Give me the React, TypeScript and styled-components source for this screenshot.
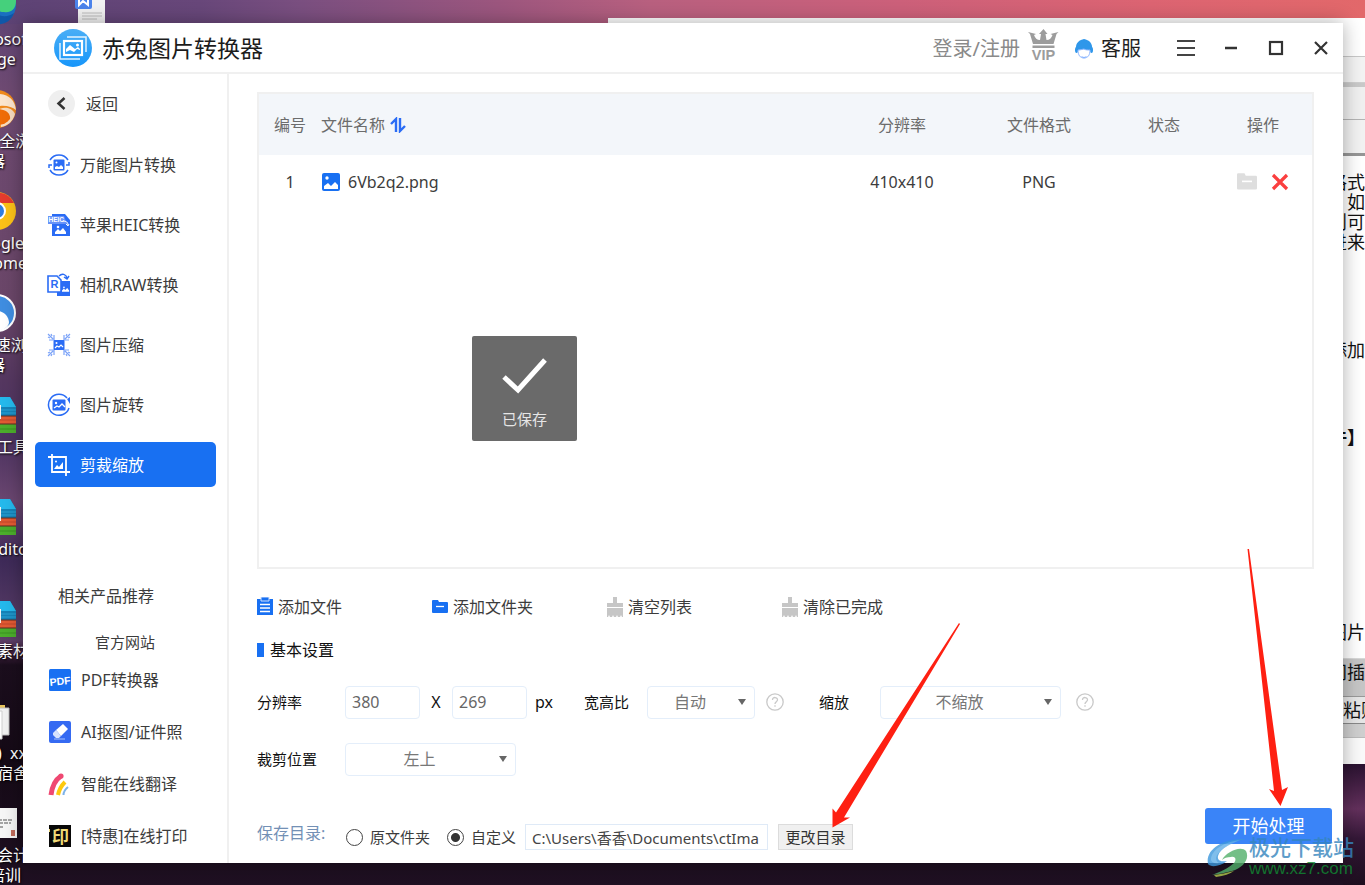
import React from "react";
import styled, { createGlobalStyle, css } from "styled-components";

const Global = createGlobalStyle`
  * { box-sizing: border-box; }
  html, body, #root { height: 100%; }
  body {
    margin: 0;
    overflow: hidden;
    font-family: "Noto Sans", "Noto Sans CJK SC", sans-serif;
    font-size: 16px;
    line-height: 24px;
    color: #3c3c3c;
  }
  button, input, select {
    font: inherit;
    color: inherit;
  }
  button {
    border: 0;
    padding: 0;
    background: none;
    cursor: pointer;
  }
  svg { display: block; flex: none; }
`;

/* ---------- desktop ---------- */

const Desktop = styled.div`
  position: relative;
  height: 100%;
  overflow: hidden;
  background:
    linear-gradient(90deg, #5d4375 0, #68477a 200px, #7a4f80 300px, #9c567e 500px, #b8607f 650px, #cc607a 900px, #dc6472 1150px, #e2686a 100%) top / 100% 24px no-repeat,
    linear-gradient(180deg, #2a1230 0, #63305c 45px, #331736 75px, #1d0e1e 100%) right bottom / 22px 121px no-repeat,
    linear-gradient(180deg, #5d4375 0, #6e4a72 90px, #6a4668 300px, #553760 380px, #4c3360 440px, #6a4670 500px, #3e2a58 560px, #5d4068 640px, #432342 652px, #1b0e1d 665px, #150a16 760px, #1f1022 100%);
`;

const DesktopColumn = styled.div`
  position: absolute;
  top: -13px;
  left: -53px;
  width: 100px;
  display: flex;
  flex-direction: column;
`;

const Shortcut = styled.div`
  height: 102px;
  display: flex;
  flex-direction: column;
  align-items: center;
  white-space: nowrap;
  font-size: 16px;
  line-height: 20px;
  color: #fff;
  text-shadow: 1px 1px 2px #000;
  svg { margin-bottom: 2px; }
`;

const DocShortcut = styled.div`
  position: absolute;
  top: -8px;
  left: 74px;
`;

function EdgeIcon() {
  return (
    <svg width="40" height="40" viewBox="0 0 40 40">
      <circle cx="20" cy="18" r="19" fill="#1a6fc0" />
      <path d="M14 0h25v14c0 9-6 12-12 11-6 0-9-3-7-7z" fill="#45d07c" />
      <path d="M20 27c6 4 13 2 17-1-3 9-11 12-18 11z" fill="#0f57a8" />
    </svg>
  );
}
function OrangeBrowser() {
  return (
    <svg width="40" height="40" viewBox="0 0 40 40">
      <circle cx="20" cy="20" r="19" fill="#f08a1c" />
      <path d="M14 6c14-4 24 3 25 15-5-4-14-6-25-2z" fill="#fbe6cf" />
      <path d="M22 20c8-3 14 0 16 5-2 8-8 12-14 13z" fill="#f7dcc0" />
      <path d="M20 20c8 0 14 4 13 10-4 5-9 6-13 6z" fill="#ef6c08" />
    </svg>
  );
}
function ChromeIcon() {
  return (
    <svg width="40" height="40" viewBox="0 0 40 40">
      <circle cx="20" cy="20" r="19" fill="#fbc117" />
      <path d="M3 12A19 19 0 0 1 37 12H20z" fill="#e33b2e" />
      <path d="M2 14l11 20c3 4 6 5 8 5l-4-12z" fill="#2da94f" />
      <circle cx="20" cy="20" r="9" fill="#fff" />
      <circle cx="20" cy="20" r="7" fill="#2f7de0" />
    </svg>
  );
}
function SpeedBrowser() {
  return (
    <svg width="40" height="40" viewBox="0 0 40 40">
      <circle cx="20" cy="20" r="18" fill="#3f8de0" stroke="#fff" strokeWidth="2" />
      <path d="M14 18c8-2 17 2 18 11 0 3-3 7-8 8l-12 1z" fill="#fff" />
    </svg>
  );
}
function ArchiveIcon() {
  return (
    <svg width="40" height="40" viewBox="0 0 40 40">
      <path d="M4 2h29l6 10v9H4z" fill="#1583b8" />
      <path d="M4 2h29l6 10H4z" fill="#25b9ec" />
      <path d="M4 15h35M4 18h35" stroke="#2aa3d6" strokeWidth="1" />
      <path d="M4 21h35v8H4z" fill="#e25a33" />
      <path d="M4 29h35v9H4z" fill="#4cae2c" />
      <path d="M4 25h35" stroke="#c2472a" strokeWidth="1" />
      <path d="M4 34h35" stroke="#3b9220" strokeWidth="1" />
      <path d="M4 21h35M4 29h35" stroke="#5a2a20" strokeWidth="1" />
      <path d="M22 10v14" stroke="#f2f2f2" strokeWidth="4" />
    </svg>
  );
}
function FolderIcon() {
  return (
    <svg width="40" height="40" viewBox="0 0 40 40">
      <path d="M4 4h24v16H4z" fill="#e9c55c" />
      <path d="M16 7h16v27H16z" fill="#f1f1f1" stroke="#bdbdbd" />
      <path d="M12 10h13v28H12z" fill="#fff" stroke="#cfcfcf" />
    </svg>
  );
}
function SheetIcon() {
  return (
    <svg width="40" height="40" viewBox="0 0 40 40">
      <path d="M0 5h40v30H0z" fill="#f6f6f6" />
      <path d="M16 17h20M22 20h12M22 24h4" stroke="#555" strokeWidth="1" strokeDasharray="4 1" />
      <path d="M34 27h4v6h-4z" fill="#c06c5c" />
    </svg>
  );
}

/* ---------- document window behind ---------- */

const BackWindow = styled.section`
  position: absolute;
  top: 18px;
  left: 608px;
  right: -40px;
  height: 746px;
  display: flex;
  flex-direction: column;
  background: #fff;
  color: #111;
  font-size: 18px;
  line-height: 20px;
  white-space: nowrap;
`;

const Band = styled.div<{ $h: number; $bg: string; $line?: string; $pad?: number }>`
  flex: none;
  height: ${(p) => p.$h}px;
  padding: 3px 0 0 ${(p) => p.$pad ?? 721}px;
  background: ${(p) => p.$bg};
  border-bottom: 1px solid ${(p) => p.$line ?? p.$bg};
`;

const Rule = styled.div<{ $h: number; $bg: string }>`
  flex: none;
  height: ${(p) => p.$h}px;
  background: ${(p) => p.$bg};
`;

const BackDoc = styled.div`
  flex: 1;
  padding: 16px 0 0 721px;
`;

const DocLine = styled.p<{ $before?: number; $indent?: boolean }>`
  margin: ${(p) => p.$before ?? 0}px 0 0;
  text-indent: ${(p) => (p.$indent ? 18 : 0)}px;
`;

/* ---------- application window ---------- */

const AppWindow = styled.main`
  position: absolute;
  inset: 23px 22px 22px 23px;
  display: flex;
  flex-direction: column;
  background: #fff;
  box-shadow: 0 0 18px rgba(0, 0, 0, 0.32);
`;

const TitleBar = styled.header`
  flex: none;
  height: 51px;
  display: flex;
  align-items: center;
  padding-left: 31px;
  border-bottom: 2px solid #f0f0f0;
`;

const AppTitle = styled.h1`
  flex: 1;
  margin: 0 0 0 10px;
  font-size: 23px;
  line-height: 32px;
  font-weight: 400;
  color: #1c1c1c;
`;

const LoginLink = styled.a`
  font-size: 20px;
  line-height: 28px;
  padding-top: 2px;
  color: #8a8a8a;
  text-decoration: none;
  margin-right: 8px;
`;

const VipBadge = styled.span`
  align-self: flex-start;
  margin-top: 6px;
`;

const ServiceButton = styled.button`
  display: flex;
  align-items: center;
  gap: 8px;
  margin: 0 22px 0 16px;
  padding-top: 2px;
  font-size: 20px;
  line-height: 28px;
  color: #1f1f1f;
`;

const WindowButton = styled.button`
  width: 45px;
  height: 48px;
  display: grid;
  place-items: center;
`;

const Body = styled.div`
  flex: 1;
  min-height: 0;
  display: flex;
`;

const Sidebar = styled.aside`
  flex: none;
  width: 206px;
  display: flex;
  flex-direction: column;
  padding: 16px 12px 15px;
  border-right: 2px solid #f0f0f0;
`;

const BackButton = styled.button`
  display: flex;
  align-items: center;
  gap: 11px;
  margin: 0 0 25px 13px;
`;

const Nav = styled.nav`
  display: flex;
  flex-direction: column;
  gap: 15px;
`;

const NavItem = styled.button<{ $active?: boolean }>`
  height: 45px;
  width: 181px;
  padding: 0 12px;
  display: flex;
  align-items: center;
  gap: 9px;
  border-radius: 5px;
  white-space: nowrap;
  ${(p) =>
    p.$active &&
    css`
      background: #1870f2;
      color: #fff;
    `}
`;

const Related = styled.section`
  margin-top: auto;
  padding-left: 13px;
`;

const RelatedTitle = styled.h2`
  margin: 0 0 24px 10px;
  font-size: 16px;
  font-weight: 400;
`;

const SiteLink = styled.a`
  display: block;
  margin: 0 0 16px 47px;
  font-size: 15px;
  line-height: 20px;
  color: inherit;
  text-decoration: none;
`;

const RelatedList = styled.div`
  display: flex;
  flex-direction: column;
  gap: 28px;
`;

const RelatedLink = styled.a`
  display: flex;
  align-items: center;
  gap: 9px;
  height: 24px;
  color: inherit;
  text-decoration: none;
  white-space: nowrap;
`;

const Content = styled.div`
  flex: 1;
  min-width: 0;
  display: flex;
  flex-direction: column;
`;

const FilePanel = styled.section`
  flex: 1;
  min-height: 0;
  margin: 18px 29px 0 28px;
  border: 2px solid #f0f0f0;
`;

const FileTable = styled.table`
  width: 100%;
  table-layout: fixed;
  border-collapse: collapse;
`;

const HeadCell = styled.th<{ $w?: number; $left?: boolean }>`
  width: ${(p) => (p.$w ? `${p.$w}px` : "auto")};
  height: 61px;
  padding: 0;
  background: #f3f6fa;
  color: #6c6c6c;
  font-weight: 400;
  text-align: ${(p) => (p.$left ? "left" : "center")};
`;

const Cell = styled.td`
  height: 54px;
  padding: 0;
  text-align: center;
`;

const Inline = styled.div<{ $gap: number; $center?: boolean }>`
  display: flex;
  align-items: center;
  justify-content: ${(p) => (p.$center ? "center" : "flex-start")};
  gap: ${(p) => p.$gap}px;
`;

const Toolbar = styled.div`
  flex: none;
  display: flex;
  height: 36px;
  margin: 20px 28px 10px;
`;

const ToolButton = styled.button`
  width: 175px;
  display: flex;
  align-items: center;
  gap: 5px;
`;

const SectionTitle = styled.h2`
  flex: none;
  margin: 0 28px 21px;
  height: 30px;
  display: flex;
  align-items: center;
  gap: 6px;
  font-size: 16px;
  font-weight: 400;
  color: #111;
  &::before {
    content: "";
    width: 7px;
    height: 14px;
    background: #1870f2;
  }
`;

const FormRow = styled.div`
  flex: none;
  display: flex;
  align-items: center;
  height: 32px;
  margin: 0 28px 25px;
  font-size: 15px;
  color: #111;
`;

const FieldLabel = styled.label<{ $w: number }>`
  flex: none;
  width: ${(p) => p.$w}px;
`;

const SizeInput = styled.input`
  width: 75px;
  height: 33px;
  padding: 0 6px;
  border: 1px solid #e4eefa;
  border-radius: 4px;
  font-size: 16px;
  color: #666;
  outline: none;
`;

const Unit = styled.span<{ $w: number; $center?: boolean }>`
  width: ${(p) => p.$w}px;
  font-size: 16px;
  padding-left: ${(p) => (p.$center ? 0 : 8)}px;
  text-align: ${(p) => (p.$center ? "center" : "left")};
`;

const SelectBox = styled.div<{ $w: number }>`
  position: relative;
  width: ${(p) => p.$w}px;
  height: 33px;
  svg {
    position: absolute;
    right: 9px;
    top: 13px;
    pointer-events: none;
  }
`;

const Select = styled.select`
  width: 100%;
  height: 100%;
  padding: 0 22px 0 0;
  border: 1px solid #e4eefa;
  border-radius: 4px;
  background: #fff;
  appearance: none;
  font-size: 16px;
  color: #777;
  text-align: center;
  text-align-last: center;
  outline: none;
`;

const HelpButton = styled.button<{ $before: number; $after?: number }>`
  margin: 0 ${(p) => p.$after ?? 0}px 0 ${(p) => p.$before}px;
`;

const Footer = styled.footer`
  flex: none;
  height: 55px;
  margin-top: 8px;
  padding: 0 11px 0 28px;
  display: flex;
  align-items: flex-start;
  justify-content: space-between;
`;

const SaveRow = styled.div`
  display: flex;
  align-items: center;
  padding-top: 16px;
  height: 42px;
  font-size: 15px;
`;

const SaveLabel = styled.span`
  width: 89px;
  align-self: flex-start;
  height: 18px;
  line-height: 18px;
  font-size: 16px;
  color: #7390b5;
`;

const RadioLabel = styled.label<{ $after: number }>`
  display: flex;
  align-items: center;
  gap: 7px;
  margin-right: ${(p) => p.$after}px;
`;

const Radio = styled.input`
  appearance: none;
  width: 17px;
  height: 17px;
  margin: 0;
  border: 1px solid #444;
  border-radius: 50%;
  background: #fff;
  &:checked {
    background: radial-gradient(circle, #333 0 4px, #fff 5px);
  }
`;

const PathInput = styled.input`
  width: 243px;
  height: 26px;
  padding: 0 6px;
  border: 1px solid #dfeaf7;
  font-size: 15px;
  color: #444;
  outline: none;
`;

const DirButton = styled.button`
  width: 75px;
  height: 26px;
  margin-left: 10px;
  border: 1px solid #dcdcdc;
  background: #f0f0f0;
  font-size: 15px;
  color: #333;
`;

const StartButton = styled.button`
  width: 127px;
  height: 36px;
  border-radius: 3px;
  background: #3a84f8;
  color: #fff;
  font-size: 18px;
`;

/* ---------- overlays ---------- */

const Toast = styled.div`
  position: absolute;
  left: 472px;
  top: 336px;
  width: 105px;
  height: 105px;
  padding-top: 22px;
  display: flex;
  flex-direction: column;
  align-items: center;
  gap: 14px;
  background: #6a6a6a;
  border-radius: 2px;
  color: #e6e6e6;
  font-size: 15px;
  line-height: 22px;
`;

const Arrows = styled.svg`
  position: absolute;
  right: 0;
  bottom: 0;
  pointer-events: none;
`;

const Watermark = styled.div`
  position: absolute;
  right: 11px;
  bottom: 7px;
  display: flex;
  align-items: flex-end;
  opacity: 0.8;
`;

const WatermarkText = styled.div`
  font-size: 21px;
  line-height: 25px;
  font-weight: 500;
  color: #3585bd;
`;

const WatermarkUrl = styled.div`
  font-family: "Liberation Sans", sans-serif;
  font-size: 17px;
  line-height: 18px;
  color: #118a33;
`;

const BLUE = "#2a6cf5";

function Logo() {
  return (
    <svg width="38" height="38" viewBox="0 0 38 38">
      <defs>
        <linearGradient id="logo" x1="0" y1="0" x2="0" y2="1">
          <stop offset="0" stopColor="#4aaef6" />
          <stop offset="1" stopColor="#1796fa" />
        </linearGradient>
      </defs>
      <circle cx="19" cy="19" r="19" fill="url(#logo)" />
      <g fill="none" stroke="#fff" strokeWidth="1.500">
        <path d="M13 8h19v15M6 14v16h20" opacity=".85" />
        <rect x="10" y="12" width="18" height="14" strokeWidth="2.200" />
      </g>
      <path d="M12 23v-3l4-4 5 4 3-2 2 2v1l-3-1-3 3-4-2z" fill="#fff" />
      <circle cx="23.500" cy="16" r="1.500" fill="#fff" />
    </svg>
  );
}

function VipIcon() {
  return (
    <svg width="31" height="32" viewBox="0 0 31 32" fill="#9c9c9c">
      <path d="M15.500 0l4 5h-2l1 6c3 0 5-2 6-5l-2-1 8-2-2 2-3 10H5L2 5 0 3l8 2-2 1c1 3 3 5 6 5l1-6h-2z" />
      <path d="M4.500 16.500h22v2.500h-22z" />
      <text x="15.500" y="31" textAnchor="middle" fontFamily="Liberation Sans, sans-serif" fontWeight="700" fontSize="14.500">VIP</text>
    </svg>
  );
}

function ServiceIcon() {
  return (
    <svg width="18" height="22" viewBox="0 0 18 22">
      <path d="M1 12C0 4 5 2 9 1c5 1 9 4 8 11z" fill="#2f97ea" />
      <ellipse cx="1.500" cy="12" rx="1.500" ry="3" fill="#2f97ea" />
      <ellipse cx="16.500" cy="12" rx="1.500" ry="3" fill="#2f97ea" />
      <path d="M3 12c3 0 5-1 6-1 1 1 4 1 6 1 0 5-2 8-6 8s-6-3-6-8z" fill="#fff" stroke="#8bb6ff" />
      <path d="M6 18c2 3 4 3 6 0-1 0-2 1-3 1s-2-1-3-1z" fill="#8bb6ff" />
    </svg>
  );
}

function Mountains({ x, y, s = 1, fill = "#fff" }: { x: number; y: number; s?: number; fill?: string }) {
  return (
    <g transform={`translate(${x} ${y}) scale(${s})`} fill={fill}>
      <circle cx="3" cy="2" r="1.300" />
      <path d="M0 9V7l3-3 2 2 3-3 3 4v2z" />
    </g>
  );
}

function ConvertIcon() {
  return (
    <svg width="24" height="24" viewBox="0 0 24 24">
      <g fill="none" stroke={BLUE} strokeWidth="1.500">
        <path d="M3 7A10.500 10.500 0 0 1 21 7M21 17A10.500 10.500 0 0 1 3 17" />
        <path d="M22 9v3h-3M2 15v-3h3" />
      </g>
      <rect x="6.500" y="6.500" width="11" height="11" rx="1" fill={BLUE} />
      <circle cx="9.500" cy="9.500" r="1" fill="#fff" />
      <path d="M8 16v-2l2-1 2 1 2-2 2 2v2z" fill="#fff" />
    </svg>
  );
}
function HeicIcon() {
  return (
    <svg width="24" height="24" viewBox="0 0 24 24">
      <path d="M5 1h13l5 6v16H5z" fill={BLUE} />
      <path d="M1 3h16l3 8H1z" fill="#6793f8" />
      <text x="1.500" y="9" fontFamily="Liberation Sans, sans-serif" fontWeight="700" fontSize="6.500" fill="#fff">HEIC</text>
      <path d="M16 8c3 0 5 1 5 4m-2-1l2 2 1-2" stroke="#fff" fill="none" />
      <Mountains x={8} y={12} />
    </svg>
  );
}
function RawIcon() {
  return (
    <svg width="24" height="24" viewBox="0 0 24 24">
      <path d="M11 8h12v15H10V8z" fill={BLUE} />
      <path d="M1 3h9l4 4v12H1z" fill="#fff" stroke={BLUE} strokeWidth="1.600" />
      <text x="3.500" y="15" fontFamily="Liberation Sans, sans-serif" fontWeight="700" fontSize="11" fill={BLUE}>R</text>
      <path d="M12 3c3-3 7-2 8 2m-3-1l3 2 2-3" stroke={BLUE} strokeWidth="1.500" fill="none" />
      <Mountains x={15} y={13} s={0.65} />
    </svg>
  );
}
function CompressIcon() {
  const corner = "M1 1l5 5M7 2v5H2M4 1l1 2M1 4l2 1";
  return (
    <svg width="24" height="24" viewBox="0 0 24 24">
      <g fill="none" stroke="#7aa2f8" strokeWidth="1.200">
        <path d={corner} />
        <path d={corner} transform="matrix(-1 0 0 1 24 0)" />
        <path d={corner} transform="matrix(1 0 0 -1 0 24)" />
        <path d={corner} transform="matrix(-1 0 0 -1 24 24)" />
      </g>
      <rect x="6.500" y="7" width="11" height="10" rx="1" fill={BLUE} />
      <circle cx="9.500" cy="10" r="1" fill="#fff" />
      <path d="M8 15l2-2 2 1 2-2 2 2" stroke="#fff" strokeWidth="1.100" fill="none" />
    </svg>
  );
}
function RotateIcon() {
  return (
    <svg width="24" height="24" viewBox="0 0 24 24">
      <path d="M22 15A10.500 10.500 0 1 1 20 5" fill="none" stroke={BLUE} strokeWidth="1.500" />
      <path d="M23 4v7l-3-5z" fill={BLUE} />
      <rect x="5.500" y="6.500" width="13" height="11" rx="1" fill={BLUE} />
      <circle cx="9" cy="10" r="1.200" fill="#fff" />
      <path d="M7 15l3-2 2 1 3-3 3 3" fill="none" stroke="#fff" strokeWidth="1.300" />
    </svg>
  );
}
function CropIcon() {
  return (
    <svg width="24" height="24" viewBox="0 0 24 24" fill="none" stroke="#fff" strokeWidth="1.800">
      <path d="M5 1v18h18M1 4h18v19" />
      <circle cx="9" cy="8.500" r="1" fill="#fff" stroke="none" />
      <path d="M7 16l3-4 2 2 4-5v7z" fill="#fff" stroke="none" />
    </svg>
  );
}

const NAV = [
  { label: "万能图片转换", Icon: ConvertIcon },
  { label: "苹果HEIC转换", Icon: HeicIcon },
  { label: "相机RAW转换", Icon: RawIcon },
  { label: "图片压缩", Icon: CompressIcon },
  { label: "图片旋转", Icon: RotateIcon },
  { label: "剪裁缩放", Icon: CropIcon, active: true },
];

function PdfIcon() {
  return (
    <svg width="24" height="24" viewBox="0 0 24 24">
      <rect x="1" y="1" width="22" height="22" rx="1.500" fill="#1870f2" />
      <text x="12" y="17" textAnchor="middle" transform="rotate(-6 12 12)" fontFamily="Liberation Sans, sans-serif" fontWeight="700" fontSize="10.500" fill="#fff">PDF</text>
    </svg>
  );
}
function EraserIcon() {
  return (
    <svg width="24" height="24" viewBox="0 0 24 24">
      <rect x="1" y="1" width="22" height="22" rx="2" fill="#356af2" />
      <path d="M8 10l7-6 5 5-7 7z" fill="#fff" />
      <path d="M8 10l5 6-2 2H8l-3-3v-2z" fill="#d7e2fd" />
      <path d="M6 19h11" stroke="#a9c1fb" />
    </svg>
  );
}
function RainbowIcon() {
  return (
    <svg width="24" height="24" viewBox="0 0 24 24" fill="none">
      <path d="M3 23C4 15 7 8 13 4" stroke="#ef4872" strokeWidth="5" />
      <circle cx="13" cy="4" r="2.600" fill="#ef4872" />
      <path d="M10 23c1-5 3-9 7-13" stroke="#fdc90f" strokeWidth="4" />
      <path d="M15.500 23c0-3 2-6 4.500-8" stroke="#7db3e8" strokeWidth="2" />
    </svg>
  );
}
function PrintIcon() {
  return (
    <svg width="24" height="24" viewBox="0 0 24 24">
      <rect x="1" y="1" width="22" height="22" fill="#080808" />
      <path d="M1 5h1v3H1z" fill="#e9d372" />
      <text x="12.500" y="18.500" textAnchor="middle" fontFamily="Noto Sans CJK SC, sans-serif" fontWeight="700" fontSize="17" fill="#f0da78">印</text>
    </svg>
  );
}

const RELATED = [
  { label: "PDF转换器", Icon: PdfIcon },
  { label: "AI抠图/证件照", Icon: EraserIcon },
  { label: "智能在线翻译", Icon: RainbowIcon },
  { label: "[特惠]在线打印", Icon: PrintIcon },
];

function SortIcon() {
  return (
    <svg width="16" height="16" viewBox="0 0 16 16" fill="none" stroke="#2a6cf5" strokeWidth="2.400">
      <path d="M6 15V2L1 7M10 1v13l5-5" />
    </svg>
  );
}
function PictureIcon() {
  return (
    <svg width="20" height="20" viewBox="0 0 20 20">
      <rect x="1" y="1" width="18" height="18" rx="2" fill="#1870f2" />
      <circle cx="6" cy="6" r="1.700" fill="#fff" />
      <path d="M3 17v-3l4-3 3 3 4-4 3 3v4z" fill="#fff" />
    </svg>
  );
}
function ClipboardIcon() {
  return (
    <svg width="16" height="20" viewBox="0 0 16 20">
      <path d="M0 2h16v16H0z" fill="#1870f2" />
      <path d="M4 0h8v4H4z" fill="#1870f2" stroke="#cfe0fd" />
      <path d="M3 7.500h10M3 11h10M3 14.500h10" stroke="#fff" strokeWidth="1.300" />
    </svg>
  );
}
function SmallFolder({ color = "#1870f2", size = 16 }: { color?: string; size?: number }) {
  return (
    <svg width={size} height={size} viewBox="0 0 16 16">
      <path d="M0 2a1 1 0 0 1 1-1h5l1 2h8a1 1 0 0 1 1 1v9a1 1 0 0 1-1 1H1a1 1 0 0 1-1-1z" fill={color} />
      <path d="M4 7.500h8" stroke="#fff" strokeWidth="1.300" />
    </svg>
  );
}
function BroomIcon() {
  return (
    <svg width="16" height="20" viewBox="0 0 16 20" fill="#c6c6c6">
      <path d="M6 0h4v6h6v4H0V6h6zM0 11h16v9h-1l-1-2-1 2h-2l-1-2-1 2H7l-1-2-1 2H3l-1-2-1 2H0z" />
    </svg>
  );
}
function Caret() {
  return (
    <svg width="8" height="6" viewBox="0 0 8 6">
      <path d="M0 0h8L4 6z" fill="#666" />
    </svg>
  );
}
function HelpIcon() {
  return (
    <svg width="18" height="18" viewBox="0 0 18 18" fill="none" stroke="#c9c9c9" strokeWidth="1.300">
      <circle cx="9" cy="9" r="8.200" />
      <path d="M6.500 7c0-3.400 5.200-3.200 5 0-.2 1.700-2.500 1.800-2.500 4M9 12.200v1.600" />
    </svg>
  );
}

export default function App() {
  return (
    <Desktop>
      <Global />
      <DesktopColumn>
        <Shortcut><EdgeIcon />Microsoft<span>Edge</span></Shortcut>
        <Shortcut><OrangeBrowser />2345安全浏览<span>器</span></Shortcut>
        <Shortcut><ChromeIcon />Google<span>Chrome</span></Shortcut>
        <Shortcut><SpeedBrowser />360极速浏览<span>器</span></Shortcut>
        <Shortcut><ArchiveIcon />压缩工具</Shortcut>
        <Shortcut><ArchiveIcon />PDFEditor</Shortcut>
        <Shortcut><ArchiveIcon />字体素材</Shortcut>
        <Shortcut><FolderIcon />{"文(1)\u00a0\u00a0xx"}<span>学生宿舍</span></Shortcut>
        <Shortcut><SheetIcon />基础会计<span>的培训</span></Shortcut>
      </DesktopColumn>
      <DocShortcut>
        <svg width="32" height="32" viewBox="0 0 32 32">
          <path d="M4 0h27v32H4z" fill="#f2f2f2" />
          <path d="M8 21h20M8 24h20M8 27h15" stroke="#bcbcbc" />
          <rect x="1" y="0" width="17" height="17" rx="2" fill="#4c84ec" />
          <path d="M5 5v8l4-4 5 4V5" stroke="#fff" strokeWidth="2" fill="none" />
        </svg>
      </DocShortcut>

      <BackWindow>
        <Band $h={39} $bg="#fff" $line="#c8c8c8" />
        <Band $h={26} $bg="#f3f3f3" $line="#cfcfcf" />
        <Rule $h={4} $bg="#c9c9c9" />
        <Band $h={33} $bg="#f0f0f0" $line="#b4b4b4" />
        <Rule $h={33} $bg="#f2f2f2" />
        <Rule $h={3} $bg="#969696" />
        <BackDoc>
          <DocLine>格式</DocLine>
          <DocLine $indent>如</DocLine>
          <DocLine>则可</DocLine>
          <DocLine>进来</DocLine>
          <DocLine $before={88}>添加</DocLine>
          <DocLine $before={67}><b>件】</b></DocLine>
          <DocLine $before={175}>图片</DocLine>
        </BackDoc>
        <Rule $h={1} $bg="#d8d8d8" />
        <Band $h={38} $bg="#c6c6c6" $line="#999">间插</Band>
        <Band $h={27} $bg="#e6e6e6" $line="#888" $pad={735}>粘贴</Band>
        <Band $h={14} $bg="#cfcfcf" $line="#bbb" />
        <Rule $h={26} $bg="#fafafa" />
      </BackWindow>

      <AppWindow>
        <TitleBar>
          <Logo />
          <AppTitle>赤兔图片转换器</AppTitle>
          <LoginLink href="#login">登录/注册</LoginLink>
          <VipBadge><VipIcon /></VipBadge>
          <ServiceButton><ServiceIcon />客服</ServiceButton>
          <WindowButton aria-label="菜单">
            <svg width="20" height="18" viewBox="0 0 20 18" stroke="#444" strokeWidth="2"><path d="M1 2h18M1 9h18M1 16h18" /></svg>
          </WindowButton>
          <WindowButton aria-label="最小化">
            <svg width="14" height="4" viewBox="0 0 14 4" stroke="#333" strokeWidth="2.500"><path d="M1 2h12" /></svg>
          </WindowButton>
          <WindowButton aria-label="最大化">
            <svg width="16" height="16" viewBox="0 0 16 16" fill="none" stroke="#333" strokeWidth="2.200"><rect x="2" y="2" width="12" height="12" /></svg>
          </WindowButton>
          <WindowButton aria-label="关闭">
            <svg width="16" height="16" viewBox="0 0 16 16" stroke="#333" strokeWidth="2.200"><path d="M2 2l12 12M14 2L2 14" /></svg>
          </WindowButton>
        </TitleBar>

        <Body>
          <Sidebar>
            <BackButton>
              <svg width="27" height="27" viewBox="0 0 27 27">
                <circle cx="13.500" cy="13.500" r="13.500" fill="#efefef" />
                <path d="M16.500 8l-6 5.500 6 5.500" fill="none" stroke="#333" strokeWidth="2.500" />
              </svg>
              返回
            </BackButton>
            <Nav>
              {NAV.map(({ label, Icon, active }) => (
                <NavItem key={label} $active={active}><Icon />{label}</NavItem>
              ))}
            </Nav>
            <Related>
              <RelatedTitle>相关产品推荐</RelatedTitle>
              <SiteLink href="#site">官方网站</SiteLink>
              <RelatedList>
                {RELATED.map(({ label, Icon }) => (
                  <RelatedLink href="#product" key={label}><Icon />{label}</RelatedLink>
                ))}
              </RelatedList>
            </Related>
          </Sidebar>

          <Content>
            <FilePanel>
              <FileTable>
                <thead>
                  <tr>
                    <HeadCell $w={62}>编号</HeadCell>
                    <HeadCell $left><Inline $gap={5}>文件名称<SortIcon /></Inline></HeadCell>
                    <HeadCell $w={124}>分辨率</HeadCell>
                    <HeadCell $w={150}>文件格式</HeadCell>
                    <HeadCell $w={100}>状态</HeadCell>
                    <HeadCell $w={98}>操作</HeadCell>
                  </tr>
                </thead>
                <tbody>
                  <tr>
                    <Cell>1</Cell>
                    <Cell><Inline $gap={7}><PictureIcon />6Vb2q2.png</Inline></Cell>
                    <Cell>410x410</Cell>
                    <Cell>PNG</Cell>
                    <Cell />
                    <Cell>
                      <Inline $gap={14} $center>
                        <button aria-label="打开文件夹"><SmallFolder color="#dedede" size={20} /></button>
                        <button aria-label="删除">
                          <svg width="18" height="18" viewBox="0 0 18 18" stroke="#fb3f3f" strokeWidth="3.200"><path d="M2 2l14 14M16 2L2 16" /></svg>
                        </button>
                      </Inline>
                    </Cell>
                  </tr>
                </tbody>
              </FileTable>
            </FilePanel>

            <Toolbar>
              <ToolButton><ClipboardIcon />添加文件</ToolButton>
              <ToolButton><SmallFolder />添加文件夹</ToolButton>
              <ToolButton><BroomIcon />清空列表</ToolButton>
              <ToolButton><BroomIcon />清除已完成</ToolButton>
            </Toolbar>

            <SectionTitle>基本设置</SectionTitle>

            <FormRow>
              <FieldLabel $w={88} htmlFor="w">分辨率</FieldLabel>
              <SizeInput id="w" defaultValue="380" />
              <Unit $w={32} $center>X</Unit>
              <SizeInput aria-label="高度" defaultValue="269" />
              <Unit $w={57}>px</Unit>
              <FieldLabel $w={63} htmlFor="ratio">宽高比</FieldLabel>
              <SelectBox $w={108}>
                <Select id="ratio"><option>自动</option></Select>
                <Caret />
              </SelectBox>
              <HelpButton $before={11} $after={35} aria-label="宽高比说明"><HelpIcon /></HelpButton>
              <FieldLabel $w={61} htmlFor="scale">缩放</FieldLabel>
              <SelectBox $w={181}>
                <Select id="scale"><option>不缩放</option></Select>
                <Caret />
              </SelectBox>
              <HelpButton $before={15} aria-label="缩放说明"><HelpIcon /></HelpButton>
            </FormRow>

            <FormRow>
              <FieldLabel $w={88} htmlFor="pos">裁剪位置</FieldLabel>
              <SelectBox $w={171}>
                <Select id="pos"><option>左上</option></Select>
                <Caret />
              </SelectBox>
            </FormRow>

            <Footer>
              <SaveRow>
                <SaveLabel>保存目录:</SaveLabel>
                <RadioLabel $after={17}><Radio type="radio" name="dir" />原文件夹</RadioLabel>
                <RadioLabel $after={9}><Radio type="radio" name="dir" defaultChecked />自定义</RadioLabel>
                <PathInput aria-label="保存路径" defaultValue={"C:\\Users\\香香\\Documents\\ctIma"} />
                <DirButton>更改目录</DirButton>
              </SaveRow>
              <StartButton>开始处理</StartButton>
            </Footer>
          </Content>
        </Body>
      </AppWindow>

      <Toast role="status">
        <svg width="46" height="36" viewBox="0 0 46 36" fill="none" stroke="#fff" strokeWidth="5"><path d="M2 19l14 13L43 2" /></svg>
        已保存
      </Toast>

      <Arrows width="565" height="385" viewBox="800 500 565 385" fill="#fe2012">
        <path d="M959 623L836 812.500 832.500 808.500V827.500L850 817.500 844 817.500 960 624z" />
        <path d="M1247.500 549L1274 791 1269 789 1280.500 806 1288 787 1282 790 1249 549z" />
      </Arrows>

      <Watermark>
        <svg width="43" height="40" viewBox="0 0 43 40">
          <path d="M2 26C-1 12 16 0 40 1 26 4 14 10 12 18c-1 5 4 6 9 5-6 5-16 7-19 3z" fill="#3b97dd" />
          <path d="M5 22C5 12 18 4 34 2 22 7 11 13 10 20c0 3 2 5 4 5-4 1-8 0-9-3z" fill="#7cc0ee" opacity=".6" />
          <path d="M40 13c4 8-3 17-14 20-7 2-14 3-20 4 8-3 17-7 22-12 3-4 1-7-3-6-4 0-7 1-9 3 4-8 19-15 24-9z" fill="#52b06a" />
          <path d="M10 39c8-1 14-3 18-6-7 2-14 3-20 4z" fill="#b2c84c" />
        </svg>
        <div>
          <WatermarkText>极光下载站</WatermarkText>
          <WatermarkUrl>www.xz7.com</WatermarkUrl>
        </div>
      </Watermark>
    </Desktop>
  );
}
